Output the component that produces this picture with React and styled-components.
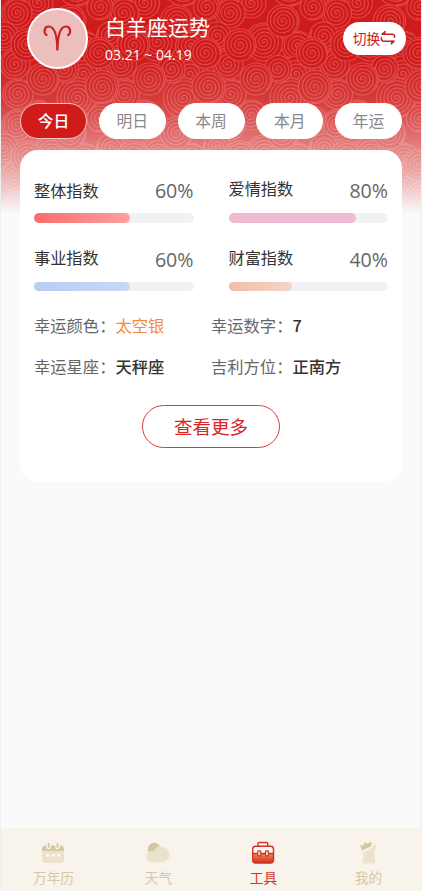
import React, { useState } from 'react'
import styled, { createGlobalStyle } from 'styled-components'

const GlobalStyle = createGlobalStyle`
  * {
    box-sizing: border-box;
  }
  body {
    margin: 0;
    background-color: #fafafa;
    font-family: "Noto Sans CJK SC", sans-serif;
  }
  button {
    font-family: inherit;
    padding: 0;
    cursor: pointer;
  }
`

const Screen = styled.div`
  position: relative;
  display: flex;
  flex-direction: column;
  height: 891px;
  background-color: #fafafa;
  border-left: 1px solid #efeff0;
  border-right: 1px solid #efeff0;
  overflow: hidden;
`

const Backdrop = styled.svg`
  position: absolute;
  top: 0;
  left: 0;
  width: 420px;
  height: 216px;
`

const Header = styled.header`
  position: relative;
  display: flex;
  align-items: flex-start;
  padding: 8px 15px 0 25.5px;
  height: 103px;
`

const Avatar = styled.div`
  width: 61px;
  height: 61px;
  border: 2.5px solid white;
  border-radius: 50%;
  background-color: #ecbebe;
`

const HeaderText = styled.div`
  flex: 1;
  margin-left: 17.5px;
  color: white;
`

const Title = styled.h1`
  margin: 3px 0 0;
  font-size: 21px;
  font-weight: 400;
  line-height: 30px;
`

const Dates = styled.p`
  margin: 4px 0 0;
  font-family: "Open Sans", sans-serif;
  font-size: 14px;
  line-height: 20px;
`

const SwitchButton = styled.button`
  display: flex;
  align-items: center;
  justify-content: center;
  width: 63px;
  height: 33px;
  margin-top: 13.5px;
  padding-bottom: 1px;
  border: none;
  border-radius: 17px;
  background-color: white;
  color: #d02020;
  font-size: 13.8px;
`

const Tabs = styled.nav`
  position: relative;
  display: flex;
  justify-content: space-between;
  padding: 0 19px;
`

const Tab = styled.button`
  width: 67px;
  height: 35.5px;
  border: 1px solid ${(props) => (props.$active ? '#f3c4c2' : 'white')};
  border-radius: 18px;
  background-color: ${(props) => (props.$active ? '#d11a1a' : 'white')};
  color: ${(props) => (props.$active ? 'white' : '#888')};
  font-size: 15.8px;
  font-weight: ${(props) => (props.$active ? 500 : 400)};
  line-height: 33px;
`

const Card = styled.main`
  position: relative;
  height: 332px;
  margin: 11.5px 19px 0;
  padding: 28px 14px 0;
  border-radius: 18px;
  background-color: white;
`

const Meters = styled.section`
  display: grid;
  grid-template-columns: 159.5px 159.5px;
  column-gap: 35px;
`

const Meter = styled.div`
  height: 68.7px;
`

const MeterHead = styled.div`
  display: flex;
  justify-content: space-between;
  height: 35px;
`

const MeterName = styled.span`
  margin-top: ${(props) => props.$offset}px;
  color: #333;
  font-size: 16.2px;
  line-height: 24px;
`

const Percent = styled.span`
  color: #666;
  font-family: "Open Sans", sans-serif;
  font-size: 19.6px;
  line-height: 26px;
`

const Track = styled.div`
  height: 9.5px;
  border-radius: 5px;
  background-color: #f2f2f2;
`

const Fill = styled.div`
  height: 100%;
  border-radius: 5px;
  background: linear-gradient(90deg, ${(props) => props.$from}, ${(props) => props.$to});
`

const Facts = styled.dl`
  display: grid;
  grid-template-columns: 177px 1fr;
  row-gap: 17px;
  margin: -2px 0 0;
`

const Fact = styled.div`
  display: flex;
  color: #666;
  font-size: 16.3px;
  line-height: 24px;
`

const FactValue = styled.dd`
  margin: 0;
  color: ${(props) => props.$color || '#333'};
  font-weight: ${(props) => (props.$color ? 400 : 500)};
`

const MoreButton = styled.button`
  display: block;
  width: 138px;
  height: 42.5px;
  margin: 27px auto 0;
  padding-bottom: 2px;
  border: 1.4px solid #dc3c3c;
  border-radius: 22px;
  background-color: white;
  color: #d62626;
  font-size: 18.5px;
  line-height: 36px;
`

const BottomBar = styled.nav`
  display: grid;
  grid-template-columns: repeat(4, 105px);
  height: 63px;
  margin-top: auto;
  background-color: #f8f3eb;
`

const BarItem = styled.a`
  display: flex;
  flex-direction: column;
  align-items: center;
  padding-top: 12px;
  color: ${(props) => (props.$active ? '#cf3a27' : '#d6c8a4')};
  font-size: 13.7px;
  line-height: 20px;

  svg {
    display: block;
    margin: 0 1px 1px 0;
  }
`

// x, y, radius, painted back to front
const spirals = [
  [251, 3, 15], [264, 42, 19], [297, 46, 15], [296, 74, 18], [290, 98, 20],
  [230, 13, 15], [313, 7, 13], [217, 36, 14], [228, 64, 15], [278, 69, 13.5],
  [231, 94, 15], [312, 53, 15.5], [283, 21, 16], [240, 45, 16], [256, 79, 16],
  [315, 87, 16.5]
]

const TILE_W = 106.5
const TILE_H = 112

const spiralPath = (cx, cy, r) => {
  const points = []
  for (let a = 0; (a / (Math.PI * 2)) * 3.6 <= r - 1; a += 0.25) {
    const d = (a / (Math.PI * 2)) * 3.6
    points.push(`${(cx + d * Math.cos(a)).toFixed(1)} ${(cy + d * Math.sin(a)).toFixed(1)}`)
  }
  return `M${points.join('L')}`
}

const offsets = [-2, -1, 0, 1]

const SpiralBackdrop = () => (
  <Backdrop viewBox="1 0 420 216">
    <defs>
      <linearGradient id="fade" x1="0" y1="0" x2="0" y2="1">
        <stop offset="0" stopColor="#fafafa" stopOpacity="0" />
        <stop offset="0.27" stopColor="#fafafa" stopOpacity="0" />
        <stop offset="0.46" stopColor="#fafafa" stopOpacity="0.14" />
        <stop offset="0.66" stopColor="#fafafa" stopOpacity="0.42" />
        <stop offset="0.8" stopColor="#fafafa" stopOpacity="0.63" />
        <stop offset="0.99" stopColor="#fafafa" stopOpacity="1" />
      </linearGradient>
    </defs>
    <rect width="422" height="216" fill="#d01b1b" />
    {spirals.map(([x, y, r]) => [-1, 0, 1].map((row) => offsets.map((col) => {
      const cx = x + (col * TILE_W)
      const cy = y + (row * TILE_H)
      return (
        <g key={`${row}-${x}-${col}`} stroke="#de4848" strokeWidth="1.15">
          <circle cx={cx} cy={cy} r={r} fill="#d01a1a" />
          <path d={spiralPath(cx, cy, r)} fill="none" />
        </g>
      )
    })))}
    <rect width="422" height="216" fill="url(#fade)" />
  </Backdrop>
)

const AriesIcon = () => (
  <svg width="56" height="56" viewBox="0 0 56 56" fill="none" stroke="#d01f1f" strokeWidth="2.2" strokeLinecap="round">
    <path d="M17.5 25C14.3 23 15 16.5 19.6 16.5C25.2 16.5 28.2 24.5 28.4 40.5C28.6 24.5 31.4 16.5 37 16.5C41.6 16.5 42.4 23 39.2 25" />
  </svg>
)

const SwapIcon = () => (
  <svg width="16" height="16" viewBox="0 0 16 16" fill="none" stroke="#d02020" strokeWidth="1.5" strokeLinejoin="round" strokeLinecap="round">
    <path d="M5 1.8L2.2 4.2H12.2C14 4.2 14.6 5.2 14.6 6.4V7.2" />
    <path d="M1.4 7.8V8.8C1.4 10.4 2.2 11.2 3.6 11.2H14L11.4 13.6" />
    <path d="M5 1.8V4.2H2.2ZM11.4 13.6V11.2H14Z" fill="#d02020" strokeWidth="0.8" />
  </svg>
)

const CalendarIcon = () => (
  <svg width="26" height="26" viewBox="0 0 26 26">
    <path d="M2 11H24V19.5Q24 23 20.5 23H5.5Q2 23 2 19.5Z" fill="#ebe2cd" />
    <path d="M2 11V9Q2 5.5 5.5 5.5H20.5Q24 5.5 24 9V11Z" fill="#d6c7a4" />
    <path d="M8.7 4.2V7M17.4 4.2V7" stroke="#f8f3eb" strokeWidth="4.6" strokeLinecap="round" />
    <path d="M8.7 3.6V7M17.4 3.6V7" stroke="#d6c7a4" strokeWidth="1.8" strokeLinecap="round" />
    <g fill="#fffdf8">
      <circle cx="7.7" cy="15.3" r="1.5" />
      <circle cx="13.2" cy="15.3" r="1.5" />
      <circle cx="18.7" cy="15.3" r="1.5" />
    </g>
  </svg>
)

const WeatherIcon = () => (
  <svg width="26" height="26" viewBox="0 0 26 26">
    <circle cx="9.3" cy="9.3" r="6.5" fill="#d6c7a4" />
    <path d="M6.8 22.5A5.5 5.5 0 0 1 6.3 11.5Q8 11.2 9 12A8 8 0 1 1 17.3 22.5Z" fill="#ebe2cd" stroke="#f8f3eb" strokeWidth="0.5" />
  </svg>
)

const ToolboxIcon = () => (
  <svg width="26" height="26" viewBox="0 0 26 26">
    <defs>
      <linearGradient id="box" x1="0" y1="0" x2="0" y2="1">
        <stop offset="0" stopColor="#ee8a61" />
        <stop offset="1" stopColor="#d52e1b" />
      </linearGradient>
    </defs>
    <rect x="2.7" y="6.2" width="20.8" height="16.8" rx="3" fill="#fffaf4" />
    <path d="M2.7 13.5H23.5V20Q23.5 23 20.5 23H5.7Q2.7 23 2.7 20Z" fill="url(#box)" />
    <g fill="none" stroke="#cf3523" strokeWidth="1.4">
      <rect x="2.7" y="6.2" width="20.8" height="16.8" rx="3" />
      <path d="M8 6V3.8Q8 2.5 9.3 2.5H16.5Q17.8 2.5 17.8 3.8V6M2.7 13.5H7.6M11 13.5H15.4M18.8 13.5H23.5" />
      <rect x="7.7" y="10.9" width="3.1" height="5" rx="0.8" fill="#fbd3be" strokeWidth="1.1" />
      <rect x="15.5" y="10.9" width="3.1" height="5" rx="0.8" fill="#fbd3be" strokeWidth="1.1" />
    </g>
  </svg>
)

const ProfileIcon = () => (
  <svg width="26" height="26" viewBox="0 0 26 26">
    <path d="M7 13L17.2 8L19.8 4.5L21.2 5.2L19.2 12L20.3 23.5H7.2L8.8 14.8Z" fill="#ebe2cd" />
    <path d="M5 5L8.2 5.8L9.9 2.3L12.2 3.8L15.5 1.8L17 3.6L15.8 6.6L6.8 10.4Z" fill="#d6c7a4" />
  </svg>
)

const tabs = ['今日', '明日', '本周', '本月', '年运']

const meters = [
  { name: '整体指数', value: 60, from: '#fb6c6e', to: '#fea09f', offset: -0.5 },
  { name: '爱情指数', value: 80, from: '#f0bbd1', to: '#f1bad4', offset: -2 },
  { name: '事业指数', value: 60, from: '#b9cdf1', to: '#c9d7f8', offset: -2 },
  { name: '财富指数', value: 40, from: '#f0bea6', to: '#f4d5c8', offset: -2 }
]

const facts = [
  { name: '幸运颜色', value: '太空银', color: '#f9893f' },
  { name: '幸运数字', value: '7' },
  { name: '幸运星座', value: '天秤座' },
  { name: '吉利方位', value: '正南方' }
]

const barItems = [
  { name: '万年历', Icon: CalendarIcon },
  { name: '天气', Icon: WeatherIcon },
  { name: '工具', Icon: ToolboxIcon, active: true },
  { name: '我的', Icon: ProfileIcon }
]

const App = () => {
  const [activeTab, setActiveTab] = useState('今日')

  return (
    <>
      <GlobalStyle />
      <Screen>
        <SpiralBackdrop />
        <Header>
          <Avatar><AriesIcon /></Avatar>
          <HeaderText>
            <Title>白羊座运势</Title>
            <Dates>03.21 ~ 04.19</Dates>
          </HeaderText>
          <SwitchButton type="button">
            切换
            <SwapIcon />
          </SwitchButton>
        </Header>
        <Tabs>
          {tabs.map((tab) => (
            <Tab
              key={tab}
              type="button"
              $active={tab === activeTab}
              onClick={() => setActiveTab(tab)}>
              {tab}
            </Tab>
          ))}
        </Tabs>
        <Card>
          <Meters>
            {meters.map((meter) => (
              <Meter key={meter.name}>
                <MeterHead>
                  <MeterName $offset={meter.offset}>{meter.name}</MeterName>
                  <Percent>{meter.value}%</Percent>
                </MeterHead>
                <Track>
                  <Fill $from={meter.from} $to={meter.to} style={{ width: `${meter.value}%` }} />
                </Track>
              </Meter>
            ))}
          </Meters>
          <Facts>
            {facts.map((fact) => (
              <Fact key={fact.name}>
                <dt>{fact.name}：</dt>
                <FactValue $color={fact.color}>{fact.value}</FactValue>
              </Fact>
            ))}
          </Facts>
          <MoreButton type="button">查看更多</MoreButton>
        </Card>
        <BottomBar>
          {barItems.map(({ name, Icon, active }) => (
            <BarItem key={name} $active={active}>
              <Icon />
              {name}
            </BarItem>
          ))}
        </BottomBar>
      </Screen>
    </>
  )
}

export default App
